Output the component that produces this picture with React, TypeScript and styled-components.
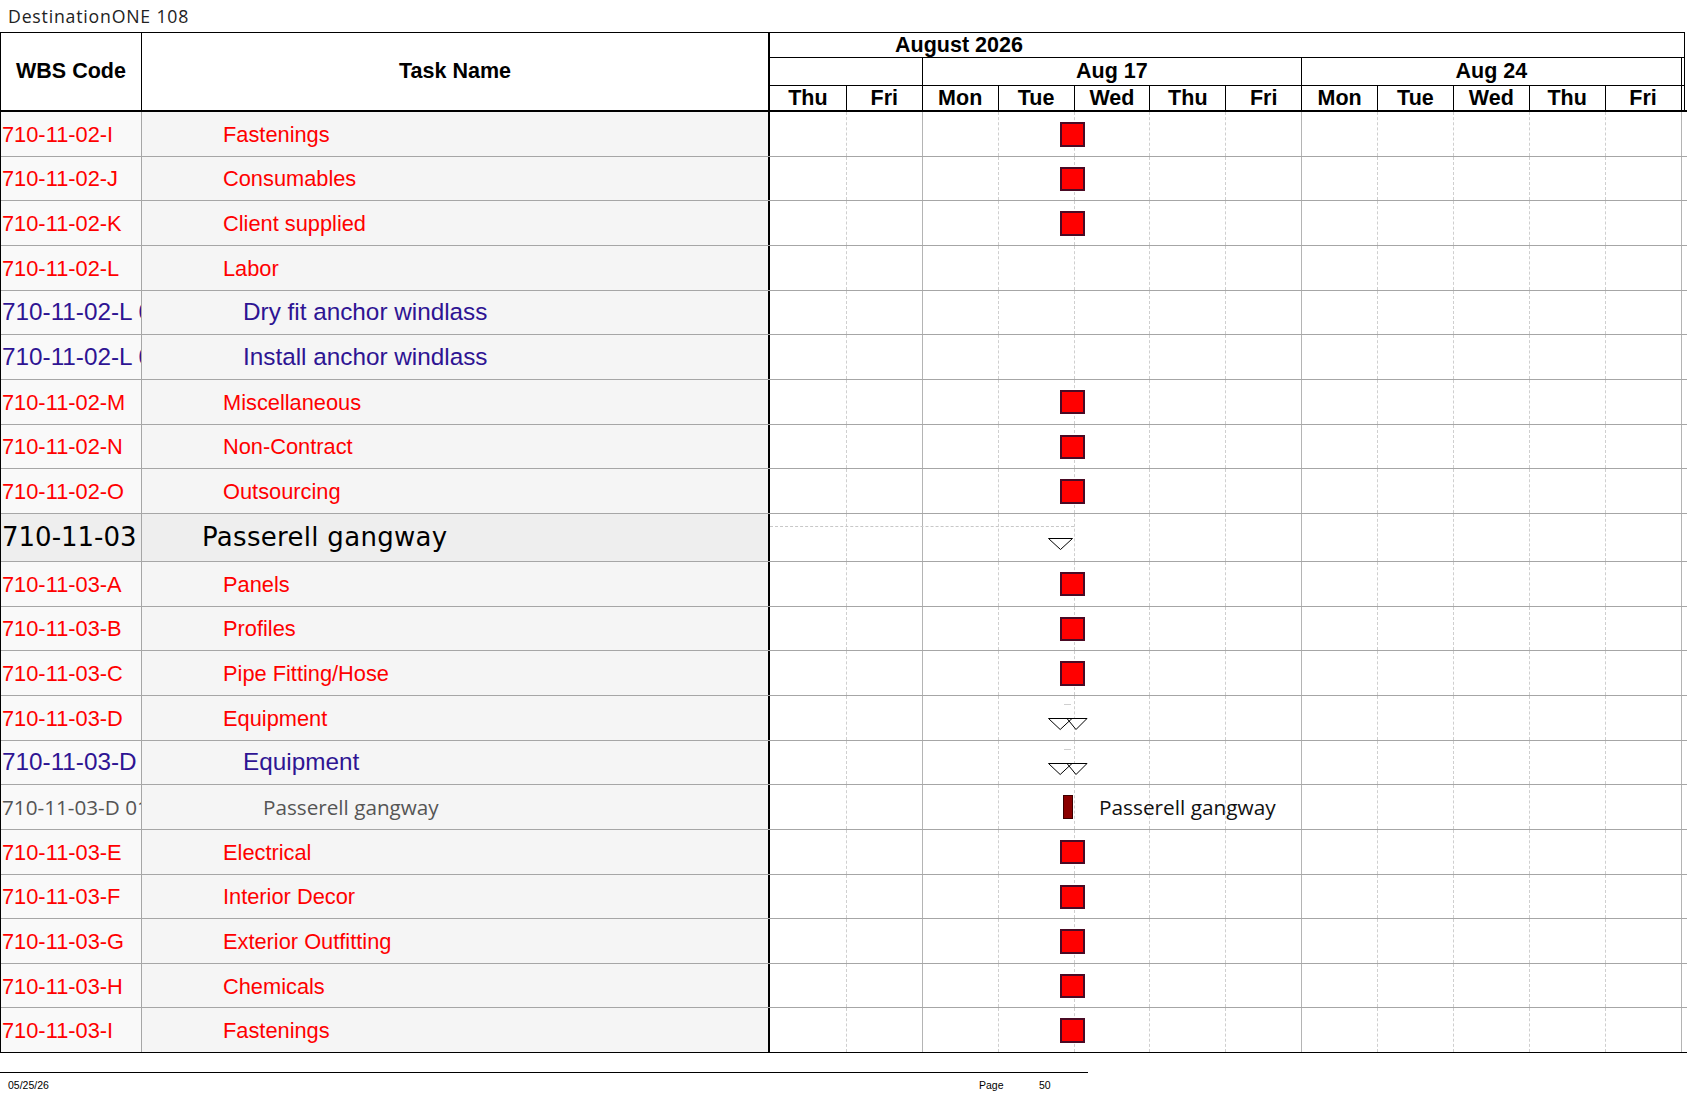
import React from 'react';
import styled, { createGlobalStyle, css } from 'styled-components';

const DAY_W = 75.875;
const CHART_COLS = `repeat(12, ${DAY_W}px) 1fr`;
// Aug 19 (Wed) start: where every milestone of this page lands
const WED_X = DAY_W * 4;

type Tone = 'red' | 'blue' | 'big' | 'gray';
type Mark = 'square' | 'summary' | 'double' | 'bar' | 'none';

interface Task {
  wbs: string;
  name: string;
  tone: Tone;
  mark: Mark;
}

const days = [
  { label: 'Thu', weekStart: false },
  { label: 'Fri', weekStart: false },
  { label: 'Mon', weekStart: true },
  { label: 'Tue', weekStart: false },
  { label: 'Wed', weekStart: false },
  { label: 'Thu', weekStart: false },
  { label: 'Fri', weekStart: false },
  { label: 'Mon', weekStart: true },
  { label: 'Tue', weekStart: false },
  { label: 'Wed', weekStart: false },
  { label: 'Thu', weekStart: false },
  { label: 'Fri', weekStart: false },
];

const weeks = [
  { label: '', span: 2 },
  { label: 'Aug 17', span: 5 },
  { label: 'Aug 24', span: 5 },
];

const tasks: Task[] = [
  { wbs: '710-11-02-I', name: 'Fastenings', tone: 'red', mark: 'square' },
  { wbs: '710-11-02-J', name: 'Consumables', tone: 'red', mark: 'square' },
  { wbs: '710-11-02-K', name: 'Client supplied', tone: 'red', mark: 'square' },
  { wbs: '710-11-02-L', name: 'Labor', tone: 'red', mark: 'none' },
  { wbs: '710-11-02-L 01', name: 'Dry fit anchor windlass', tone: 'blue', mark: 'none' },
  { wbs: '710-11-02-L 02', name: 'Install anchor windlass', tone: 'blue', mark: 'none' },
  { wbs: '710-11-02-M', name: 'Miscellaneous', tone: 'red', mark: 'square' },
  { wbs: '710-11-02-N', name: 'Non-Contract', tone: 'red', mark: 'square' },
  { wbs: '710-11-02-O', name: 'Outsourcing', tone: 'red', mark: 'square' },
  { wbs: '710-11-03', name: 'Passerell gangway', tone: 'big', mark: 'summary' },
  { wbs: '710-11-03-A', name: 'Panels', tone: 'red', mark: 'square' },
  { wbs: '710-11-03-B', name: 'Profiles', tone: 'red', mark: 'square' },
  { wbs: '710-11-03-C', name: 'Pipe Fitting/Hose', tone: 'red', mark: 'square' },
  { wbs: '710-11-03-D', name: 'Equipment', tone: 'red', mark: 'double' },
  { wbs: '710-11-03-D', name: 'Equipment', tone: 'blue', mark: 'double' },
  { wbs: '710-11-03-D 01', name: 'Passerell gangway', tone: 'gray', mark: 'bar' },
  { wbs: '710-11-03-E', name: 'Electrical', tone: 'red', mark: 'square' },
  { wbs: '710-11-03-F', name: 'Interior Decor', tone: 'red', mark: 'square' },
  { wbs: '710-11-03-G', name: 'Exterior Outfitting', tone: 'red', mark: 'square' },
  { wbs: '710-11-03-H', name: 'Chemicals', tone: 'red', mark: 'square' },
  { wbs: '710-11-03-I', name: 'Fastenings', tone: 'red', mark: 'square' },
];

const toneCss = {
  red: css`
    color: #ff0000;
    font-family: 'Liberation Sans', Arial, sans-serif;
    font-size: 21.8px;
    padding-top: 2px;
  `,
  blue: css`
    color: #2e1493;
    font-family: 'Liberation Sans', Arial, sans-serif;
    font-size: 24.3px;
  `,
  big: css`
    color: #000;
    font-family: 'DejaVu Sans', Verdana, sans-serif;
    font-size: 26px;
  `,
  gray: css`
    color: #555;
    font-family: 'Open Sans', sans-serif;
    font-size: 20.7px;
  `,
};

const indent: Record<Tone, number> = { red: 81, blue: 101, big: 60, gray: 121 };

const GlobalStyle = createGlobalStyle`
  html, body {
    margin: 0;
    padding: 0;
    background: #fff;
  }
  body {
    font-family: 'Liberation Sans', Arial, sans-serif;
  }
`;

const Page = styled.div`
  width: 1687px;
  height: 1097px;
  overflow: hidden;
  background: #fff;
`;

const TitleBar = styled.div`
  display: flex;
  align-items: center;
  height: 32px;
  padding-left: 8px;
  font-family: 'Open Sans', sans-serif;
  font-size: 17.7px;
  letter-spacing: 0.8px;
  color: #222;
`;

const Table = styled.div`
  border-left: 1px solid #000;
`;

const Header = styled.div`
  display: grid;
  grid-template-columns: 141px 628px 1fr;
  height: 80px;
  box-sizing: border-box;
  border-bottom: 2px solid #000;
`;

const HeadCell = styled.div<{ $thick?: boolean }>`
  display: flex;
  align-items: center;
  justify-content: center;
  border-top: 1px solid #000;
  border-right: ${(p) => (p.$thick ? 2 : 1)}px solid #000;
  font-weight: bold;
  font-size: 21.5px;
  color: #000;
`;

const ChartHead = styled.div`
  display: flex;
  flex-direction: column;
  margin-right: 2px;
  border-top: 1px solid #000;
  border-right: 1px solid #000;
`;

const MonthRow = styled.div`
  display: flex;
  align-items: center;
  height: 25px;
  box-sizing: border-box;
  padding: 0 0 0 125px;
  border-bottom: 1px solid #000;
  font-weight: bold;
  font-size: 21.5px;
`;

const ScaleRow = styled.div<{ $h: number; $ruled?: boolean }>`
  display: grid;
  grid-template-columns: ${CHART_COLS};
  height: ${(p) => p.$h}px;
  box-sizing: border-box;
  border-bottom: ${(p) => (p.$ruled ? '1px solid #000' : 'none')};
`;

const ScaleCell = styled.div<{ $span?: number; $edge?: boolean }>`
  grid-column: span ${(p) => p.$span ?? 1};
  display: flex;
  align-items: center;
  justify-content: center;
  padding-top: 1px;
  border-left: ${(p) => (p.$edge ? '1px solid #000' : 'none')};
  font-weight: bold;
  font-size: 21.5px;
  color: #000;
  line-height: 1;
`;

const Row = styled.div<{ $tall?: boolean }>`
  display: grid;
  grid-template-columns: 141px 628px 1fr;
  height: ${(p) => (p.$tall ? 48 : 44.67)}px;
  box-sizing: border-box;
  border-bottom: 1px solid #a6a6a6;

  &:last-child {
    border-bottom-color: #000;
  }
`;

const WbsCell = styled.div<{ $tone: Tone; $shade?: boolean }>`
  display: flex;
  align-items: center;
  padding-left: 1px;
  overflow: hidden;
  white-space: nowrap;
  background: ${(p) => (p.$shade ? '#eeeeee' : '#f9f9f9')};
  border-right: 1px solid #a6a6a6;
  ${(p) => toneCss[p.$tone]}
`;

const TaskCell = styled.div<{ $tone: Tone; $shade?: boolean }>`
  display: flex;
  align-items: center;
  overflow: hidden;
  white-space: nowrap;
  background: ${(p) => (p.$shade ? '#eeeeee' : '#f5f5f5')};
  border-right: 2px solid #000;
  ${(p) => toneCss[p.$tone]}
  padding-left: ${(p) => indent[p.$tone]}px;
  letter-spacing: ${(p) => (p.$tone === 'big' ? '0.3px' : 'normal')};
`;

const ChartCell = styled.div`
  position: relative;
  display: grid;
  grid-template-columns: ${CHART_COLS};
  background: #fff;
`;

const DayCell = styled.div<{ $line: 'none' | 'week' | 'day' }>`
  border-left: ${(p) =>
    p.$line === 'none' ? 'none' : p.$line === 'week' ? '1px solid #b4b4b4' : '1px dashed #cfcfcf'};
`;

const Milestone = styled.div`
  position: absolute;
  top: 10px;
  left: ${WED_X - 13.5}px;
  width: 25px;
  height: 24.5px;
  box-sizing: border-box;
  background: #ff0000;
  border: 2px solid #4a0a24;
`;

const TaskBar = styled.div`
  position: absolute;
  top: 10px;
  left: ${WED_X - 10.2}px;
  width: 9.5px;
  height: 24px;
  box-sizing: border-box;
  background: #8b0000;
  border: 1.5px solid #3d0000;
`;

const BarLabel = styled.div`
  position: absolute;
  top: 0;
  bottom: 0;
  left: ${WED_X + 25.5}px;
  display: flex;
  align-items: center;
  font-family: 'Open Sans', sans-serif;
  font-size: 20.8px;
  color: #111;
  white-space: nowrap;
`;

const SummaryLine = styled.div`
  position: absolute;
  top: 12px;
  left: 0;
  width: ${WED_X}px;
  border-top: 1px dashed #c8c8c8;
`;

const Tick = styled.div`
  position: absolute;
  top: 8px;
  left: ${WED_X - 10}px;
  width: 7px;
  height: 1px;
  background: #cfcfcf;
`;

const Glyph = styled.svg<{ $top: number }>`
  position: absolute;
  top: ${(p) => p.$top}px;
  left: ${WED_X - 25.5}px;
  overflow: visible;
`;

const Footer = styled.div`
  margin-top: 19px;
  width: 1088px;
  border-top: 1px solid #000;
`;

const FooterText = styled.div`
  display: grid;
  grid-template-columns: 971px 60px auto;
  align-items: center;
  height: 24px;
  padding-left: 8px;
  font-family: 'Liberation Sans', Arial, sans-serif;
  font-size: 10.5px;
  color: #000;
`;

const ChartMarks: React.FC<{ mark: Mark; name: string }> = ({ mark, name }) => {
  switch (mark) {
    case 'square':
      return <Milestone />;
    case 'bar':
      return (
        <>
          <TaskBar />
          <BarLabel>{name}</BarLabel>
        </>
      );
    case 'summary':
      return (
        <>
          <SummaryLine />
          <Glyph $top={24} width="25" height="12" viewBox="0 0 25 12">
            <polygon points="0.5,0.5 24.5,0.5 12.5,11.5" fill="#fff" stroke="#000" strokeWidth="1" />
          </Glyph>
        </>
      );
    case 'double':
      return (
        <>
          <Tick />
          <Glyph $top={22} width="40" height="12" viewBox="0 0 40 12">
            <polygon points="0.5,0.5 24,0.5 12.2,11.5" fill="#fff" />
            <polygon points="19,0.5 39,0.5 28,11.5" fill="#fff" />
            <polygon points="0.5,0.5 24,0.5 12.2,11.5" fill="none" stroke="#000" strokeWidth="1" />
            <polygon points="19,0.5 39,0.5 28,11.5" fill="none" stroke="#000" strokeWidth="1" />
          </Glyph>
        </>
      );
    default:
      return null;
  }
};

const App: React.FC = () => {
  return (
    <Page>
      <GlobalStyle />
      <TitleBar>DestinationONE 108</TitleBar>
      <Table>
        <Header>
          <HeadCell>WBS Code</HeadCell>
          <HeadCell $thick>Task Name</HeadCell>
          <ChartHead>
            <MonthRow>August 2026</MonthRow>
            <ScaleRow $h={28} $ruled>
              {weeks.map((w, i) => (
                <ScaleCell key={i} $span={w.span} $edge={i > 0}>
                  {w.label}
                </ScaleCell>
              ))}
              <ScaleCell $edge />
            </ScaleRow>
            <ScaleRow $h={24}>
              {days.map((d, i) => (
                <ScaleCell key={i} $edge={i > 0}>
                  {d.label}
                </ScaleCell>
              ))}
              <ScaleCell $edge />
            </ScaleRow>
          </ChartHead>
        </Header>
        {tasks.map((t, i) => {
          const big = t.tone === 'big';
          return (
            <Row key={i} $tall={big}>
              <WbsCell $tone={t.tone} $shade={big}>
                {t.wbs}
              </WbsCell>
              <TaskCell $tone={t.tone} $shade={big}>
                {t.name}
              </TaskCell>
              <ChartCell>
                {days.map((d, j) => (
                  <DayCell key={j} $line={j === 0 ? 'none' : d.weekStart ? 'week' : 'day'} />
                ))}
                <DayCell $line="week" />
                <ChartMarks mark={t.mark} name={t.name} />
              </ChartCell>
            </Row>
          );
        })}
      </Table>
      <Footer />
      <FooterText>
        <span>05/25/26</span>
        <span>Page</span>
        <span>50</span>
      </FooterText>
    </Page>
  );
};

export default App;
